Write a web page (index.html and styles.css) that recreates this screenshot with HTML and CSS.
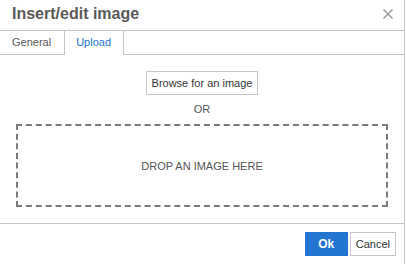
FILE: index.html
```html
<!DOCTYPE html>
<html lang="en">
<head>
    <meta charset="UTF-8">
    <title>Insert/edit image</title>
    <link rel="stylesheet" href="styles.css">
</head>
<body>
    <div class="dialog">
        <!-- Title bar -->
        <div class="dialog-head">
            <span class="dialog-title">Insert/edit image</span>
            <span class="close-btn">
                <svg width="10" height="10" viewBox="0 0 10 10">
                    <path d="M0.5 0.5 L9.5 9.5 M9.5 0.5 L0.5 9.5" stroke="#9e9e9e" stroke-width="1.5" fill="none"/>
                </svg>
            </span>
        </div>

        <!-- Tabs -->
        <div class="tabs">
            <div class="tab">General</div>
            <div class="tab active">Upload</div>
        </div>

        <!-- Upload panel -->
        <div class="panel">
            <button class="browse-btn">Browse for an image</button>
            <div class="or">OR</div>
            <div class="dropzone">DROP AN IMAGE HERE</div>
        </div>

        <!-- Footer -->
        <div class="dialog-foot">
            <button class="btn btn-primary">Ok</button>
            <button class="btn">Cancel</button>
        </div>
    </div>
</body>
</html>
```

FILE: styles.css
```css
:root {
    --line: #c5c5c5;
    --text: #595959;
    --blue: #2276d2;
}

* {
    box-sizing: border-box;
}

body {
    margin: 0;
    background: #fff;
    font-family: "Liberation Sans", Arial, sans-serif;
    font-size: 11px;
    color: var(--text);
}

.dialog {
    width: 405px;
    height: 264px;
    border-right: 1px solid var(--line);
    display: flex;
    flex-direction: column;
}

/* Title bar */
.dialog-head {
    flex-shrink: 0;
    height: 31px;
    border-bottom: 1px solid var(--line);
    display: flex;
    justify-content: space-between;
    align-items: flex-start;
    padding: 0 11px 0 12px;
}

.dialog-title {
    font-size: 16px;
    font-weight: bold;
    line-height: 27px;
    color: var(--text);
}

.close-btn {
    display: flex;
    margin-top: 9px;
}

/* Tabs */
.tabs {
    flex-shrink: 0;
    display: flex;
    align-items: flex-start;
    height: 24px;
    border-bottom: 1px solid var(--line);
}

.tab {
    line-height: 23px;
    padding: 0 13px 0 12px;
    color: var(--text);
}

.tab.active {
    height: 24px;
    margin-bottom: -1px;
    padding: 0 12px 0 11px;
    background: #fff;
    color: var(--blue);
    border-left: 1px solid var(--line);
    border-right: 1px solid var(--line);
}

/* Panel */
.panel {
    flex: 1;
    padding: 16px;
    display: flex;
    flex-direction: column;
    align-items: center;
    border-bottom: 1px solid var(--line);
}

.browse-btn {
    height: 24px;
    padding: 0 5px;
    border: 1px solid var(--line);
    background: #fff;
    font-family: inherit;
    font-size: 11px;
    color: #333;
}

.or {
    line-height: 29px;
    color: #555;
}

.dropzone {
    align-self: stretch;
    height: 83px;
    border: 2px dashed #7a7a7a;
    display: flex;
    align-items: center;
    justify-content: center;
    color: #555;
}

/* Footer */
.dialog-foot {
    flex-shrink: 0;
    height: 40px;
    display: flex;
    justify-content: flex-end;
    align-items: flex-start;
    gap: 2px;
    padding: 8px 8px 0 0;
}

.btn {
    height: 24px;
    padding: 0 5px;
    border: 1px solid var(--line);
    background: #fff;
    font-family: inherit;
    font-size: 11px;
    color: #333;
}

.btn-primary {
    width: 43px;
    background: var(--blue);
    border-color: var(--blue);
    color: #fff;
    font-weight: bold;
    font-size: 12px;
}
```
